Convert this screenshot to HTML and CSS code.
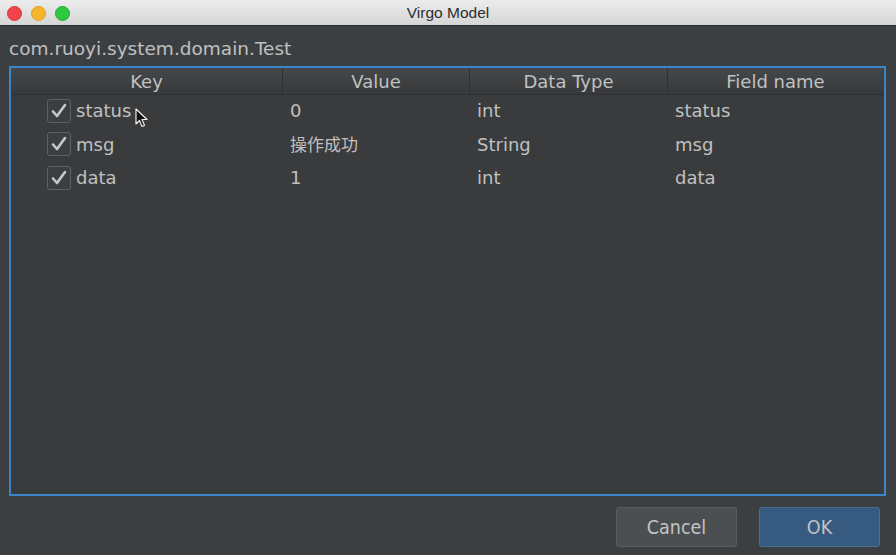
FILE: index.html
```html
<!DOCTYPE html>
<html>
<head>
<meta charset="utf-8">
<link rel="stylesheet" href="styles.css">
</head>
<body>
<div class="window">
  <div class="titlebar">
    <div class="lights">
      <span class="light red"></span>
      <span class="light yellow"></span>
      <span class="light green"></span>
    </div>
    <div class="title">Virgo Model</div>
  </div>
  <div class="content">
    <div class="classname">com.ruoyi.system.domain.Test</div>
    <div class="frame">
      <div class="table">
        <div class="row head">
          <div class="cell c1">Key</div>
          <div class="cell c2">Value</div>
          <div class="cell c3">Data Type</div>
          <div class="cell c4">Field name</div>
        </div>
        <div class="row body-row">
          <div class="cell c1"><span class="cb"><svg viewBox="0 0 24 24" width="24" height="24"><path d="M6 12.5 L10 17 L18 6" fill="none" stroke="#c8c8c8" stroke-width="2.6" stroke-linecap="round" stroke-linejoin="round"/></svg></span>status</div>
          <div class="cell c2">0</div>
          <div class="cell c3">int</div>
          <div class="cell c4">status</div>
        </div>
        <div class="row body-row">
          <div class="cell c1"><span class="cb"><svg viewBox="0 0 24 24" width="24" height="24"><path d="M6 12.5 L10 17 L18 6" fill="none" stroke="#c8c8c8" stroke-width="2.6" stroke-linecap="round" stroke-linejoin="round"/></svg></span>msg</div>
          <div class="cell c2 cjk">操作成功</div>
          <div class="cell c3">String</div>
          <div class="cell c4">msg</div>
        </div>
        <div class="row body-row">
          <div class="cell c1"><span class="cb"><svg viewBox="0 0 24 24" width="24" height="24"><path d="M6 12.5 L10 17 L18 6" fill="none" stroke="#c8c8c8" stroke-width="2.6" stroke-linecap="round" stroke-linejoin="round"/></svg></span>data</div>
          <div class="cell c2">1</div>
          <div class="cell c3">int</div>
          <div class="cell c4">data</div>
        </div>
      </div>
    </div>
    <div class="footer">
      <button class="btn cancel">Cancel</button>
      <button class="btn ok">OK</button>
    </div>
  </div>
  <svg class="cursor" width="14" height="22" viewBox="0 0 14 22"><path d="M1 1 L1 16 L4.5 12.5 L7 18.5 L9.5 17.5 L7 11.5 L12 11.5 Z" fill="#111" stroke="#eee" stroke-width="1.2" stroke-linejoin="round"/></svg>
</div>
</body>
</html>
```
FILE: styles.css
```css
html, body {
  margin: 0;
  padding: 0;
}
body {
  width: 896px;
  height: 555px;
  overflow: hidden;
  background: #3c3f41;
  font-family: "DejaVu Sans", "Noto Sans CJK SC", sans-serif;
}
.window {
  position: relative;
  width: 896px;
  height: 555px;
}
.titlebar {
  position: relative;
  height: 25px;
  background: linear-gradient(#ececec, #d6d6d6);
  border-bottom: 1px solid #2a2a2a;
  display: flex;
  align-items: center;
  justify-content: center;
}
.lights {
  position: absolute;
  left: 7px;
  top: 6px;
  display: flex;
  gap: 9px;
}
.light {
  width: 13px;
  height: 13px;
  border-radius: 50%;
  display: block;
}
.red { background: #f2434a; border: 0.5px solid #d23a3d; }
.yellow { background: #f7b52a; border: 0.5px solid #dba02a; }
.green { background: #2ec942; border: 0.5px solid #22a834; }
.title {
  font-family: "Liberation Sans", "DejaVu Sans", sans-serif;
  font-size: 15.5px;
  color: #2d2d2d;
  padding-top: 1px;
}
.content {
  padding: 0 10px 0 9px;
}
.classname {
  height: 40px;
  box-sizing: border-box;
  padding-top: 12px;
  font-size: 18.5px;
  color: #c0c0c0;
}
.frame {
  height: 426px;
  border: 2px solid #3b86c8;
  background: #393b3d;
}
.table {
  display: flex;
  flex-direction: column;
}
.row {
  display: flex;
  height: 33.5px;
  align-items: center;
  box-sizing: border-box;
}
.body-row {
  padding-bottom: 2px;
}
.row.head {
  height: 27px;
  background: linear-gradient(#45484a, #37393b);
  border-bottom: 1px solid #2f3133;
  margin-right: 1px;
}
.head .cell {
  justify-content: center;
  padding: 0;
  height: 100%;
  border-right: 1px solid #2e3032;
  box-sizing: border-box;
}
.head .cell.c4 { border-right: none; }
.cell {
  display: flex;
  align-items: center;
  font-size: 18px;
  color: #c0c0c0;
  padding-left: 7px;
  box-sizing: border-box;
  white-space: nowrap;
}
.cjk { font-size: 17px; padding-bottom: 2px; }
.c1 { width: 272px; padding-left: 36px; }
.head .c1 { padding-left: 0; }
.c2 { width: 187px; }
.c3 { width: 198px; }
.c4 { flex: 1; }
.cb {
  width: 22px;
  height: 22px;
  border: 1px solid #5e6163;
  border-radius: 3px;
  background: #3c3f41;
  display: flex;
  align-items: center;
  justify-content: center;
  margin-right: 5px;
  overflow: hidden;
}
.cb svg { display: block; flex: none; }
.footer {
  display: flex;
  justify-content: flex-end;
  gap: 22px;
  padding-top: 11px;
  padding-right: 6px;
}
.btn {
  width: 121px;
  height: 40px;
  border-radius: 3px;
  font-family: "DejaVu Sans Condensed", "DejaVu Sans", sans-serif;
  font-size: 19.5px;
  color: #c4c4c4;
  padding: 0;
}
.cancel {
  background: #4b4f51;
  border: 1px solid #5a5d5f;
}
.ok {
  background: #375a80;
  border: 1px solid #4a6f93;
}
.cursor {
  position: absolute;
  left: 135px;
  top: 108px;
}
```
